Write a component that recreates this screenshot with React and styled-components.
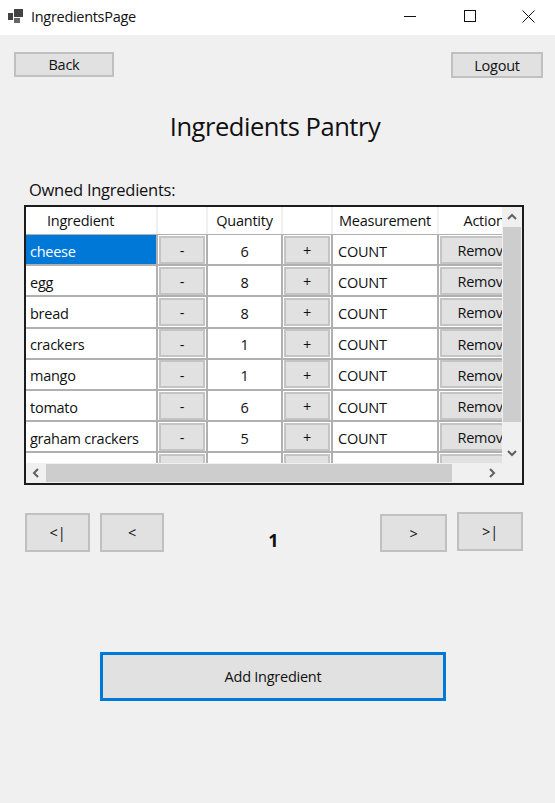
import React from "react";
import styled, { createGlobalStyle } from "styled-components";

const GlobalStyle = createGlobalStyle`
  html, body {
    margin: 0;
    padding: 0;
    background: #f0f0f0;
  }
  body {
    font-family: "Open Sans", "Noto Sans", sans-serif;
    color: #111;
  }
`;

const Window = styled.div`
  width: 555px;
  height: 803px;
  overflow: hidden;
  background: #f0f0f0;
`;

const TitleBar = styled.div`
  box-sizing: border-box;
  height: 35px;
  background: #fff;
  display: flex;
  align-items: center;
  padding: 0 0 3px 8px;
`;

const WindowTitle = styled.span`
  font-size: 14.5px;
  letter-spacing: -0.3px;
  margin-left: 7px;
  flex: 1;
`;

const WindowControl = styled.div`
  width: ${(p) => p.$w}px;
  display: flex;
  align-items: center;
  justify-content: center;
`;

const Content = styled.div`
  padding: 17px 12px 0 14px;
`;

const TopRow = styled.div`
  display: flex;
  justify-content: space-between;
  align-items: flex-start;
`;

const Button = styled.button`
  box-sizing: border-box;
  width: ${(p) => p.$w}px;
  height: ${(p) => p.$h}px;
  margin-top: ${(p) => p.$top || 0}px;
  margin-left: ${(p) => p.$left || 0}px;
  padding: 0;
  background: #e1e1e1;
  border: ${(p) => (p.$focus ? "3px solid #0078d7" : "2px solid #c0c0c0")};
  font-family: inherit;
  font-size: 14.5px;
  letter-spacing: -0.25px;
  color: #111;
  flex: none;
`;

const Title = styled.h1`
  margin: 28px 7px 0 0;
  height: 45px;
  text-align: center;
  font-size: 25.5px;
  line-height: 40px;
  font-weight: 400;
  letter-spacing: -0.45px;
`;

const OwnedLabel = styled.div`
  margin: 28px 0 0 15px;
  height: 26px;
  font-size: 16.5px;
  line-height: 22px;
  letter-spacing: -0.25px;
`;

const Table = styled.div`
  box-sizing: border-box;
  width: 500px;
  height: 280px;
  margin-left: 10px;
  border: 2px solid #1c1c1c;
  background: #f0f0f0;
  display: grid;
  grid-template-columns: 476px 20px;
  grid-template-rows: 256px 20px;
`;

const Viewport = styled.div`
  overflow: hidden;
  background: #fff;
`;

const Row = styled.div`
  display: flex;
  width: 520px;
  height: ${(p) => (p.$header ? "27px" : "31.2px")};
  box-sizing: border-box;
  border-bottom: ${(p) => (p.$header ? 0 : 2)}px solid #b0b0b0;
`;

const Cell = styled.div`
  box-sizing: border-box;
  width: ${(p) => p.$w}px;
  flex: none;
  display: flex;
  align-items: center;
  justify-content: ${(p) => (p.$center ? "center" : "flex-start")};
  padding-left: ${(p) => p.$pad ?? 5}px;
  padding-top: ${(p) => (p.$drop ? 3 : 0)}px;
  border-right: 2px solid ${(p) => (p.$header ? "#f0f0f0" : "#b0b0b0")};
  background: ${(p) => (p.$selected ? "#0078d7" : "#fff")};
  color: ${(p) => (p.$selected ? "#fff" : "#111")};
  font-size: 14.5px;
  letter-spacing: -0.25px;
  white-space: nowrap;
  overflow: hidden;
`;

const HeaderRule = styled.div`
  height: 1px;
  width: 520px;
  background: #b0b0b0;
`;

const CellButton = styled.div`
  box-sizing: border-box;
  width: ${(p) => p.$w}px;
  height: 28px;
  margin-left: 1px;
  padding-top: 2px;
  flex: none;
  display: flex;
  align-items: center;
  justify-content: center;
  background: #e1e1e1;
  border: 2px solid #c4c4c4;
  font-size: 14.5px;
  letter-spacing: -0.25px;
`;

const VScroll = styled.div`
  background: #f0f0f0;
  display: flex;
  flex-direction: column;
  align-items: center;
`;

const HScroll = styled.div`
  background: #f0f0f0;
  display: flex;
  align-items: center;
`;

const Arrow = styled.div`
  width: 20px;
  height: ${(p) => (p.$vertical ? 20 : 18)}px;
  flex: none;
  display: flex;
  align-items: center;
  justify-content: center;
`;

const Thumb = styled.div`
  background: #cdcdcd;
  width: ${(p) => (p.$vertical ? "18px" : "406px")};
  height: ${(p) => (p.$vertical ? "195px" : "18px")};
`;

const Spacer = styled.div`
  flex: 1;
`;

const Corner = styled.div`
  background: #f0f0f0;
`;

const Pager = styled.div`
  display: flex;
  align-items: flex-start;
  height: 40px;
  margin: 28px 0 0 11px;
`;

const PageNumber = styled.div`
  box-sizing: border-box;
  width: 216px;
  padding: 16px 0 0 3px;
  text-align: center;
  font-size: 18px;
  line-height: 22px;
  font-weight: 700;
`;

const AddRow = styled.div`
  display: flex;
  margin: 99px 0 0 86px;
`;

const Chevron = ({ d }) => (
  <svg width="10" height="10" viewBox="0 0 10 10" fill="none" stroke="#606060" strokeWidth="2">
    <path d={d} />
  </svg>
);

const AppIcon = () => (
  <svg width="16" height="16" viewBox="0 0 16 16" fill="#444">
    <rect x="0" y="5" width="5" height="7" />
    <rect x="6" y="1" width="9" height="8" />
    <rect x="6" y="10" width="6" height="5" fill="#666" />
  </svg>
);

const ingredients = [
  { name: "cheese", qty: 6, selected: true },
  { name: "egg", qty: 8 },
  { name: "bread", qty: 8 },
  { name: "crackers", qty: 1 },
  { name: "mango", qty: 1 },
  { name: "tomato", qty: 6 },
  { name: "graham crackers", qty: 5 },
];

const IngredientRow = ({ item }) => (
  <Row>
    <Cell $w={132} $selected={item.selected} $pad={4} $drop>{item.name}</Cell>
    <Cell $w={50} $pad={0}>
      <CellButton $w={46}>-</CellButton>
    </Cell>
    <Cell $w={75} $center $pad={0} $drop>{item.qty}</Cell>
    <Cell $w={50} $pad={0}>
      <CellButton $w={46}>+</CellButton>
    </Cell>
    <Cell $w={106} $drop>COUNT</Cell>
    <Cell $w={92} $pad={0}>
      <CellButton $w={88}>Remove</CellButton>
    </Cell>
  </Row>
);

export default function App() {
  return (
    <Window>
      <GlobalStyle />
      <TitleBar>
        <AppIcon />
        <WindowTitle>IngredientsPage</WindowTitle>
        <WindowControl $w={58}>
          <svg width="12" height="12" viewBox="0 0 12 12" stroke="#111" strokeWidth="1">
            <path d="M0 6.5H12" />
          </svg>
        </WindowControl>
        <WindowControl $w={62}>
          <svg width="12" height="12" viewBox="0 0 12 12" fill="none" stroke="#111" strokeWidth="1">
            <rect x="0.5" y="0.5" width="11" height="11" />
          </svg>
        </WindowControl>
        <WindowControl $w={54}>
          <svg width="13" height="13" viewBox="0 0 13 13" stroke="#111" strokeWidth="1">
            <path d="M0.5 0.5L12.5 12.5M12.5 0.5L0.5 12.5" />
          </svg>
        </WindowControl>
      </TitleBar>
      <Content>
        <TopRow>
          <Button $w={100} $h={25}>Back</Button>
          <Button $w={92} $h={26}>Logout</Button>
        </TopRow>
        <Title>Ingredients Pantry</Title>
        <OwnedLabel>Owned Ingredients:</OwnedLabel>
        <Table>
          <Viewport>
            <Row $header>
              <Cell $header $w={132} $pad={21}>Ingredient</Cell>
              <Cell $header $w={50} />
              <Cell $header $w={75} $center $pad={0}>Quantity</Cell>
              <Cell $header $w={50} />
              <Cell $header $w={106} $center $pad={0}>Measurement</Cell>
              <Cell $header $w={92} $center $pad={0}>Action</Cell>
            </Row>
            <HeaderRule />
            {ingredients.map((item) => (
              <IngredientRow key={item.name} item={item} />
            ))}
            <Row>
              <Cell $w={132} />
              <Cell $w={50} $pad={0}><CellButton $w={46} /></Cell>
              <Cell $w={75} />
              <Cell $w={50} $pad={0}><CellButton $w={46} /></Cell>
              <Cell $w={106} />
              <Cell $w={92} $pad={0}><CellButton $w={88} /></Cell>
            </Row>
          </Viewport>
          <VScroll>
            <Arrow $vertical><Chevron d="M1 7L5 3L9 7" /></Arrow>
            <Thumb $vertical />
            <Spacer />
            <Arrow $vertical><Chevron d="M1 3L5 7L9 3" /></Arrow>
          </VScroll>
          <HScroll>
            <Arrow><Chevron d="M7 1L3 5L7 9" /></Arrow>
            <Thumb />
            <Spacer />
            <Arrow><Chevron d="M3 1L7 5L3 9" /></Arrow>
          </HScroll>
          <Corner />
        </Table>
        <Pager>
          <Button $w={65} $h={39}>&lt;|</Button>
          <Button $w={64} $h={39} $left={10}>&lt;</Button>
          <PageNumber>1</PageNumber>
          <Button $w={67} $h={38} $top={1}>&gt;</Button>
          <Button $w={66} $h={39} $top={-1} $left={10}>&gt;|</Button>
        </Pager>
        <AddRow>
          <Button $w={346} $h={49} $focus>Add Ingredient</Button>
        </AddRow>
      </Content>
    </Window>
  );
}
